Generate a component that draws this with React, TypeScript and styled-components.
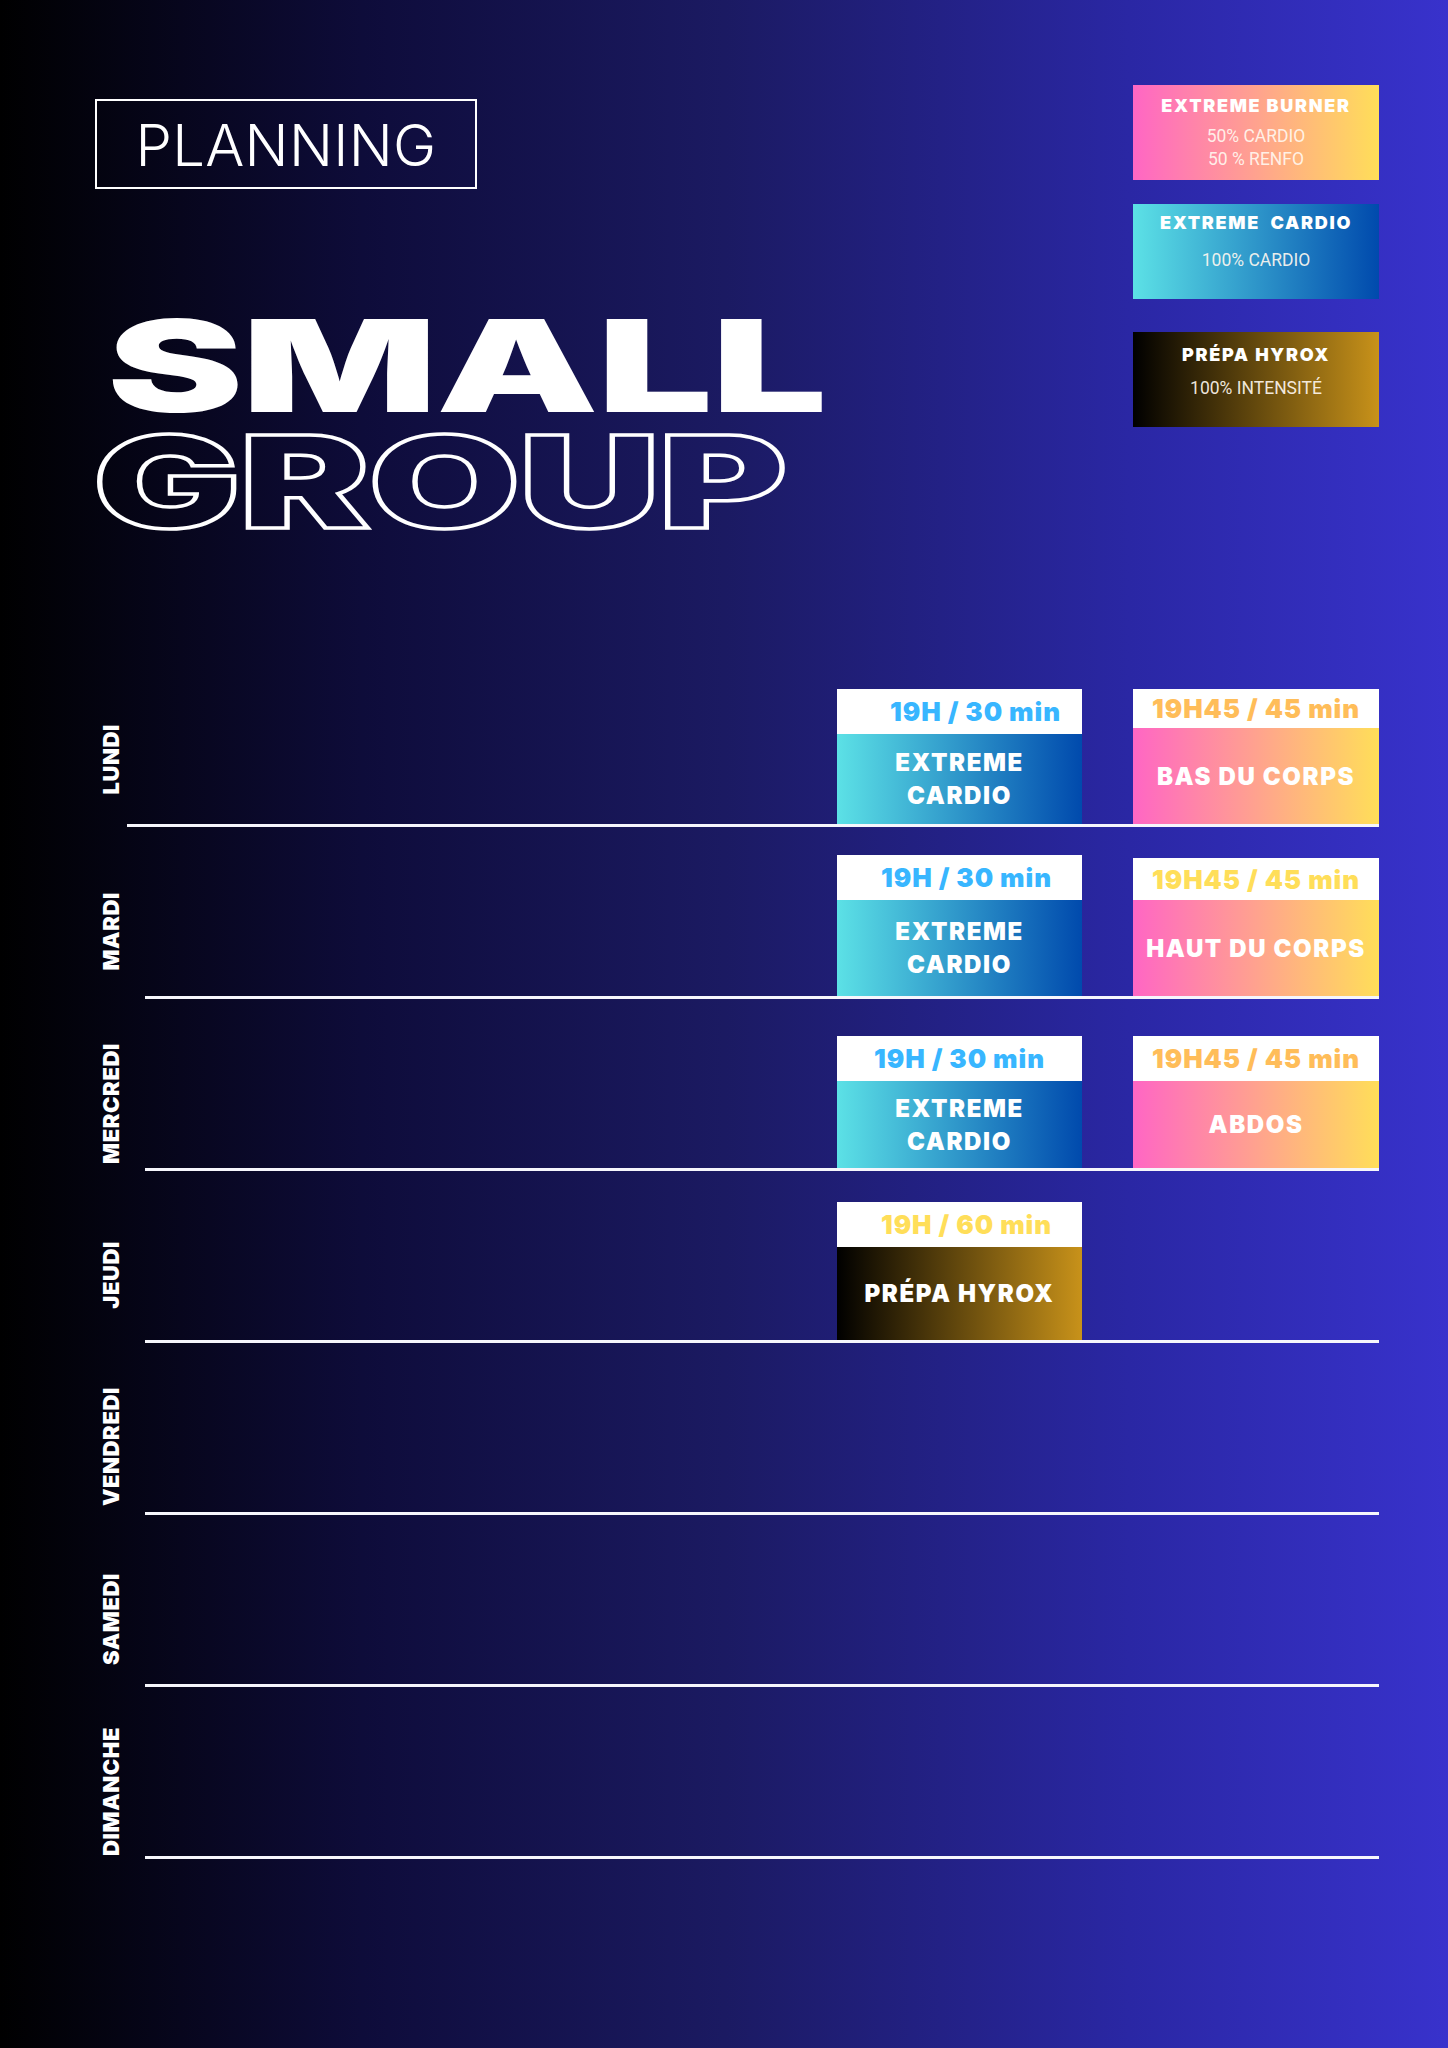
import React from "react";
import styled, { createGlobalStyle } from "styled-components";

const Global = createGlobalStyle`
  html, body { margin: 0; padding: 0; background: #000; }
  * { box-sizing: border-box; }
`;

const gradients = {
  pink: "linear-gradient(90deg, #ff66c4 0%, #ffde59 100%)",
  blue: "linear-gradient(90deg, #5ce1e6 0%, #004aad 100%)",
  gold: "linear-gradient(90deg, #000000 0%, #c8921a 100%)",
};
type Grad = keyof typeof gradients;

const Page = styled.div`
  width: 1448px;
  height: 2048px;
  overflow: hidden;
  background: linear-gradient(90deg, #000000 0%, #0e0c3a 25%, #1b1a62 50%, #2a27a4 78%, #3832cc 100%);
  font-family: Inter, "Noto Sans", sans-serif;
  color: #fff;
`;

const Header = styled.header`
  height: 655px;
  display: flex;
  justify-content: space-between;
  padding: 85px 69px 0 95px;
`;

const LeftCol = styled.div`
  display: flex;
  flex-direction: column;
  align-items: flex-start;
`;

const PlanningBox = styled.div`
  margin-top: 14px;
  width: 382px;
  height: 90px;
  border: 2px solid #fff;
  display: flex;
  align-items: center;
  justify-content: center;
  font-family: Inter, sans-serif;
  font-weight: 300;
  font-size: 58px;
  letter-spacing: 0.3px;
  line-height: 1;
  padding-top: 2px;
`;

const Title = styled.h1`
  margin: 119px 0 0 0;
  display: flex;
  flex-direction: column;
  font-family: Inter, sans-serif;
  font-weight: 900;
  font-size: 128px;
  line-height: 116px;
`;

const TitleLine = styled.span<{ $scale: number; $shift: number; $outline?: boolean }>`
  display: block;
  height: 116px;
  white-space: nowrap;
  transform-origin: left center;
  transform: scaleX(${(p) => p.$scale});
  margin-left: ${(p) => p.$shift}px;
  color: ${(p) => (p.$outline ? "transparent" : "#fff")};
  -webkit-text-stroke: ${(p) => (p.$outline ? "3.5px #fff" : "0")};
  letter-spacing: -1px;
`;

const Legend = styled.div`
  width: 246px;
  display: flex;
  flex-direction: column;
`;

const LegendBox = styled.div<{ $grad: Grad; $mt: number; $pt: number; $gap: number }>`
  height: 95px;
  margin-top: ${(p) => p.$mt}px;
  padding-top: ${(p) => p.$pt}px;
  background: ${(p) => gradients[p.$grad]};
  display: flex;
  flex-direction: column;
  align-items: center;
  gap: ${(p) => p.$gap}px;
`;

const LegendTitle = styled.div`
  font-family: Inter, sans-serif;
  font-weight: 900;
  font-size: 18px;
  line-height: 22px;
  letter-spacing: 1.7px;
  white-space: pre;
  color: #fff;
`;

const LegendText = styled.div`
  font-family: Roboto, "Noto Sans", sans-serif;
  font-weight: 400;
  font-size: 17.5px;
  line-height: 23px;
  color: rgba(255, 248, 240, 0.92);
  text-align: center;
`;

const Schedule = styled.section`
  display: flex;
  flex-direction: column;
`;

const Row = styled.div`
  display: grid;
  grid-template-columns: 145px 1234px;
  height: 172px;
`;

const DayCell = styled.div`
  display: flex;
  justify-content: flex-end;
  align-items: center;
  padding-right: 23px;
  padding-top: 36px;
`;

const DayLabel = styled.span`
  writing-mode: vertical-rl;
  transform: rotate(180deg);
  font-family: Inter, sans-serif;
  font-weight: 900;
  font-size: 22px;
  line-height: 22px;
  letter-spacing: 0.6px;
  white-space: nowrap;
`;

const Track = styled.div<{ $extend: number }>`
  margin-left: ${(p) => -p.$extend}px;
  border-bottom: 3px solid #f6f6fc;
  display: flex;
  justify-content: flex-end;
  align-items: flex-end;
  gap: 51px;
`;

const Slot = styled.div<{ $w: number }>`
  width: ${(p) => p.$w}px;
`;

const Card = styled.div`
  display: flex;
  flex-direction: column;
`;

const CardHead = styled.div<{ $h: number; $color: string; $shift: number }>`
  height: ${(p) => p.$h}px;
  background: #fff;
  color: ${(p) => p.$color};
  display: flex;
  align-items: center;
  justify-content: center;
  padding-left: ${(p) => p.$shift * 2}px;
  font-family: Inter, sans-serif;
  font-weight: 900;
  font-size: 26px;
  letter-spacing: 0.9px;
  white-space: nowrap;
`;

const CardBody = styled.div<{ $h: number; $grad: Grad }>`
  height: ${(p) => p.$h}px;
  background: ${(p) => gradients[p.$grad]};
  display: flex;
  align-items: center;
  justify-content: center;
  text-align: center;
  font-family: Inter, sans-serif;
  font-weight: 900;
  font-size: 24px;
  line-height: 33px;
  letter-spacing: 1.6px;
  color: #fff;
  white-space: pre-line;
`;

const BLUE = "#38b6ff";
const ORANGE = "#ffbd59";
const YELLOW = "#ffde59";

type Session = {
  time: string;
  color: string;
  name: string;
  grad: Grad;
  head: number;
  body: number;
  shift?: number;
};

type Day = { name: string; extend?: number; a?: Session; b?: Session };

const cardio = (head: number, body: number, shift = 0): Session => ({
  time: "19H / 30 min",
  color: BLUE,
  name: "EXTREME\nCARDIO",
  grad: "blue",
  head,
  body,
  shift,
});

const days: Day[] = [
  {
    name: "LUNDI",
    extend: 18,
    a: cardio(45, 90, 16),
    b: { time: "19H45 / 45 min", color: ORANGE, name: "BAS DU CORPS", grad: "pink", head: 39, body: 96 },
  },
  {
    name: "MARDI",
    a: cardio(45, 96, 7),
    b: { time: "19H45 / 45 min", color: YELLOW, name: "HAUT DU CORPS", grad: "pink", head: 42, body: 96 },
  },
  {
    name: "MERCREDI",
    a: cardio(45, 87, 0),
    b: { time: "19H45 / 45 min", color: ORANGE, name: "ABDOS", grad: "pink", head: 45, body: 87 },
  },
  {
    name: "JEUDI",
    a: { time: "19H / 60 min", color: YELLOW, name: "PRÉPA HYROX", grad: "gold", head: 45, body: 93, shift: 7 },
  },
  { name: "VENDREDI" },
  { name: "SAMEDI" },
  { name: "DIMANCHE" },
];

const SessionCard: React.FC<{ s?: Session; w: number }> = ({ s, w }) => (
  <Slot $w={w}>
    {s && (
      <Card>
        <CardHead $h={s.head} $color={s.color} $shift={s.shift ?? 0}>
          {s.time}
        </CardHead>
        <CardBody $h={s.body} $grad={s.grad}>
          {s.name}
        </CardBody>
      </Card>
    )}
  </Slot>
);

export default function App() {
  return (
    <>
      <Global />
      <Page>
        <Header>
          <LeftCol>
            <PlanningBox>PLANNING</PlanningBox>
            <Title>
              <TitleLine $scale={1.6} $shift={12}>SMALL</TitleLine>
              <TitleLine $scale={1.53} $shift={-2} $outline>
                GROUP
              </TitleLine>
            </Title>
          </LeftCol>
          <Legend>
            <LegendBox $grad="pink" $mt={0} $pt={10} $gap={8}>
              <LegendTitle>EXTREME BURNER</LegendTitle>
              <LegendText>
                50% CARDIO
                <br />
                50 % RENFO
              </LegendText>
            </LegendBox>
            <LegendBox $grad="blue" $mt={24} $pt={8} $gap={15}>
              <LegendTitle>{"EXTREME  CARDIO"}</LegendTitle>
              <LegendText>100% CARDIO</LegendText>
            </LegendBox>
            <LegendBox $grad="gold" $mt={33} $pt={12} $gap={11}>
              <LegendTitle>PRÉPA HYROX</LegendTitle>
              <LegendText>100% INTENSITÉ</LegendText>
            </LegendBox>
          </Legend>
        </Header>
        <Schedule>
          {days.map((d) => (
            <Row key={d.name}>
              <DayCell>
                <DayLabel>{d.name}</DayLabel>
              </DayCell>
              <Track $extend={d.extend ?? 0}>
                <SessionCard s={d.a} w={245} />
                <SessionCard s={d.b} w={246} />
              </Track>
            </Row>
          ))}
        </Schedule>
      </Page>
    </>
  );
}
